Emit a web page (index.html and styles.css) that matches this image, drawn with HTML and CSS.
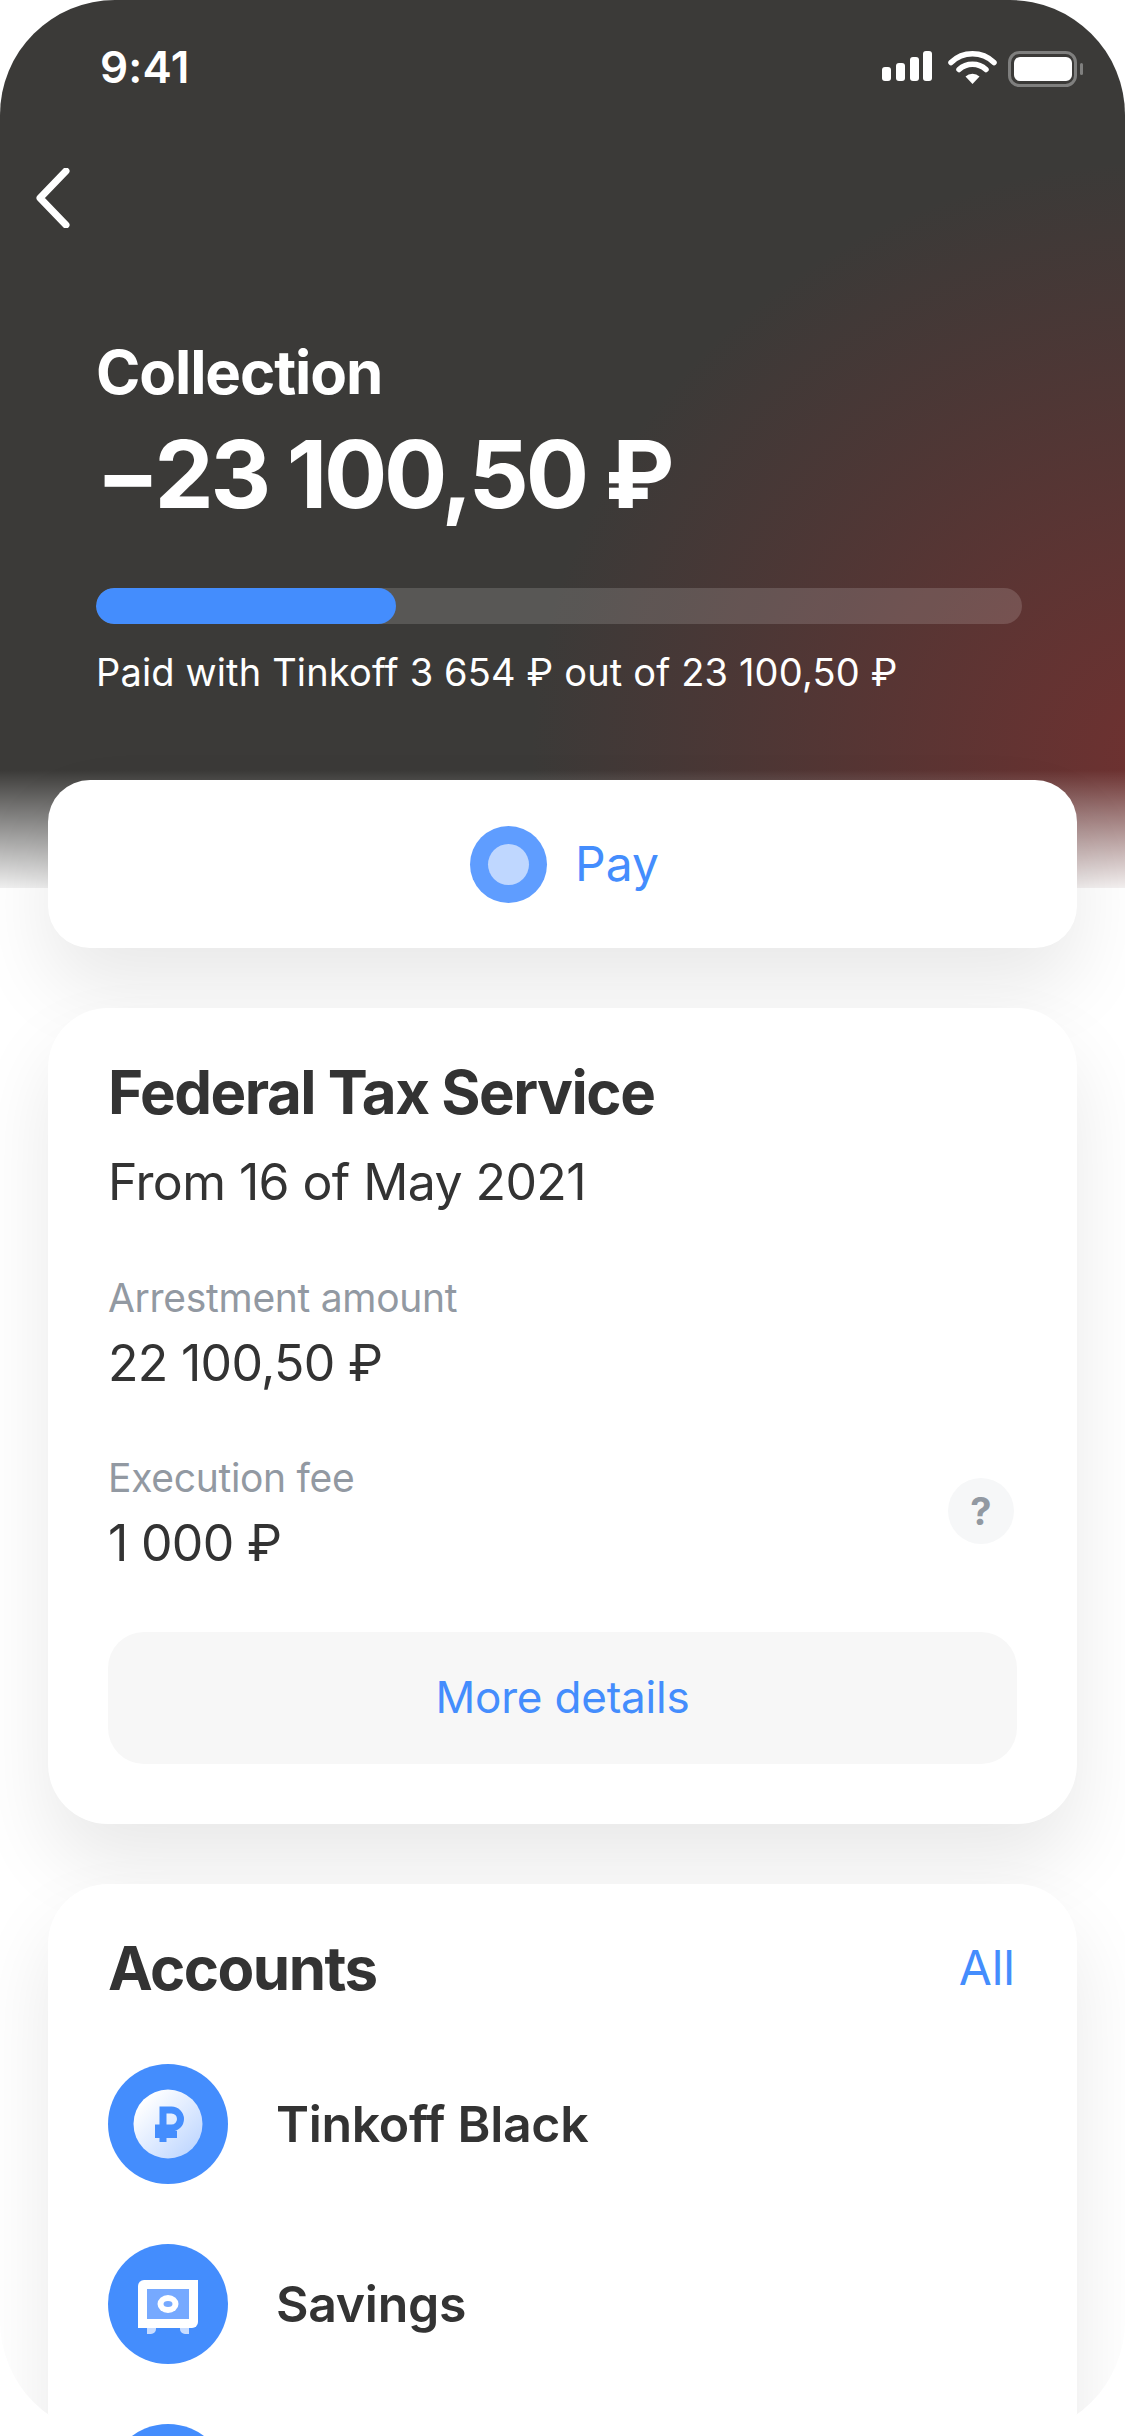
FILE: index.html
```html
<!DOCTYPE html>
<html lang="en">
<head>
    <meta charset="utf-8">
    <title>Collection</title>
    <link rel="stylesheet" href="styles.css">
</head>
<body>
<div class="screen">
    <!-- dark header -->
    <div class="header">
        <div class="status">
            <span class="time">9:41</span>
            <svg class="status-icons" width="204" height="36" viewBox="0 0 204 36">
                <rect x="0" y="16" width="9" height="14" rx="3" fill="#fff"/>
                <rect x="14" y="12" width="9" height="18" rx="3" fill="#fff"/>
                <rect x="28" y="6" width="9" height="24" rx="3" fill="#fff"/>
                <rect x="41" y="0" width="9" height="30" rx="3" fill="#fff"/>
                <path d="M69 10.500A31 31 0 0 1 112 10.500" fill="none" stroke="#fff" stroke-width="5.500" stroke-linecap="round" transform="translate(0 1)"/>
                <path d="M77 17.500A20 20 0 0 1 104 17.500" fill="none" stroke="#fff" stroke-width="5.500" stroke-linecap="round" transform="translate(0 1)"/>
                <path d="M90.500 33L83.500 25.500A10 10 0 0 1 97.500 25.500Z" fill="#fff"/>
                <rect x="127.500" y="1.500" width="66" height="33" rx="10" fill="none" stroke="#7f7f7e" stroke-width="3"/>
                <rect x="132" y="6" width="58" height="24" rx="6" fill="#fff"/>
                <rect x="198" y="12" width="3" height="12" rx="1.500" fill="#7f7f7e"/>
            </svg>
        </div>
        <svg class="back" width="34" height="60" viewBox="0 0 34 60">
            <path d="M30 3L4 30L30 57" fill="none" stroke="#fff" stroke-width="7" stroke-linecap="round" stroke-linejoin="round"/>
        </svg>
        <div class="summary">
            <div class="summary-title">Collection</div>
            <div class="summary-amount">−23 100,50 ₽</div>
            <div class="bar"><div class="bar-fill"></div></div>
            <div class="summary-note">Paid with Tinkoff 3 654 ₽ out of 23 100,50 ₽</div>
        </div>
    </div>

    <div class="content">
        <div class="card pay">
            <span class="pay-icon"><span class="pay-dot"></span></span>
            <span class="pay-text">Pay</span>
        </div>

        <div class="card info">
            <div class="card-title">Federal Tax Service</div>
            <div class="info-date">From 16 of May 2021</div>
            <div class="field">
                <div class="field-label">Arrestment amount</div>
                <div class="field-value">22 100,50 ₽</div>
            </div>
            <div class="field field-row">
                <div>
                    <div class="field-label">Execution fee</div>
                    <div class="field-value">1 000 ₽</div>
                </div>
                <span class="help">?</span>
            </div>
            <div class="more">More details</div>
        </div>

        <div class="card accounts">
            <div class="accounts-head">
                <span class="card-title">Accounts</span>
                <span class="all">All</span>
            </div>
            <div class="account">
                <svg class="account-icon" width="120" height="120" viewBox="0 0 120 120">
                    <defs>
                        <linearGradient id="coin" x1="0" y1="0" x2="1" y2="1">
                            <stop offset="0.150" stop-color="#fff"/>
                            <stop offset="0.850" stop-color="#c3d9ff"/>
                        </linearGradient>
                    </defs>
                    <circle cx="60" cy="60" r="60" fill="#448dfd"/>
                    <circle cx="60" cy="60" r="34.500" fill="url(#coin)"/>
                    <path d="M55 78V46H63.500A9 9 0 0 1 63.500 64H47M47 70.500H69" fill="none" stroke="#448dfd" stroke-width="7"/>
                </svg>
                <span class="account-name">Tinkoff Black</span>
            </div>
            <div class="account">
                <svg class="account-icon" width="120" height="120" viewBox="0 0 120 120">
                    <circle cx="60" cy="60" r="60" fill="#448dfd"/>
                    <path d="M39 84H48V85A5 5 0 0 1 43 90H39ZM72 84H81V90H77A5 5 0 0 1 72 85Z" fill="#c8dcff"/>
                    <path d="M36 36H90V78A6 6 0 0 1 84 84H30V42A6 6 0 0 1 36 36Z" fill="#fff"/>
                    <rect x="39" y="45" width="42" height="30" fill="#76a9ff"/>
                    <ellipse cx="60" cy="60" rx="10.500" ry="9" fill="#fff"/>
                    <ellipse cx="60" cy="60" rx="4.500" ry="3" fill="#76a9ff"/>
                </svg>
                <span class="account-name">Savings</span>
            </div>
            <div class="account">
                <svg class="account-icon" width="120" height="120" viewBox="0 0 120 120">
                    <circle cx="60" cy="60" r="60" fill="#448dfd"/>
                </svg>
            </div>
        </div>
    </div>
</div>
</body>
</html>
```

FILE: styles.css
```css
*{margin: 0;padding: 0;box-sizing: border-box;}
body{width: 1125px;height: 2436px;background: #fff;font-family: Inter, "Noto Sans", sans-serif;color: #333;overflow: hidden;}
.screen{width: 1125px;height: 2436px;border-radius: 115px;overflow: hidden;background: #fff;}

/* header */
.header{height: 888px;padding-top: 51px;color: #fff;background:
    linear-gradient(to bottom, rgba(255,255,255,0) 770px, rgba(255,255,255,.93) 888px),
    radial-gradient(640px 600px at 1170px 760px, #703130 0, rgba(112,49,48,0) 100%),
    #3b3a38;}
.status{display: flex;justify-content: space-between;align-items: center;height: 36px;padding: 0 39px 0 100px;}
.time{margin-bottom: 4px;font-size: 44px;font-weight: 600;line-height: 36px;letter-spacing: .2px;}
.status-icons{display: block;}
.back{display: block;margin: 81px 0 0 36px;}
.summary{padding: 112px 103px 0 96px;}
.summary-title{font-size: 60px;font-weight: 700;line-height: 64px;letter-spacing: -1.1px;}
.summary-amount{margin-top: 10px;font-size: 94px;font-weight: 700;line-height: 120px;letter-spacing: -3.3px;}
.bar{margin-top: 54px;height: 36px;border-radius: 18px;background: rgba(255,255,255,.15);overflow: hidden;}
.bar-fill{width: 300px;height: 36px;border-radius: 18px;background: #448dfd;}
.summary-note{margin-top: 22px;font-size: 38px;line-height: 52px;letter-spacing: .15px;}

/* cards */
.content{padding: 0 48px;margin-top: -108px;}
.card{background: #fff;border-radius: 60px;box-shadow: 0 40px 80px rgba(0,0,0,.09);margin-bottom: 60px;}
.pay{height: 168px;border-radius: 42px;display: flex;justify-content: center;align-items: center;gap: 28px;padding-left: 4px;}
.pay-icon{width: 77px;height: 77px;border-radius: 50%;background: #5f9dff;display: flex;justify-content: center;align-items: center;}
.pay-dot{width: 41px;height: 41px;border-radius: 50%;background: #bfd7ff;}
.pay-text{font-size: 48px;color: #448dfd;line-height: 60px;}

.info{height: 816px;padding: 52px 60px 60px;}
.card-title{font-size: 60px;font-weight: 700;line-height: 64px;letter-spacing: -1.5px;}
.info-date{margin: 28px 0 62px;font-size: 50px;line-height: 60px;letter-spacing: -.6px;}
.field{margin-top: 61px;}
.field-label{font-size: 39px;line-height: 48px;letter-spacing: -.3px;color: #9299a2;}
.field-value{margin-top: 11px;font-size: 50px;line-height: 60px;letter-spacing: -.7px;}
.field-row{display: flex;justify-content: space-between;align-items: center;padding-right: 3px;}
.help{width: 66px;height: 66px;margin-bottom: 5px;border-radius: 50%;background: #f6f7f8;color: #9299a2;font-size: 38px;font-weight: 700;line-height: 66px;text-align: center;}
.more{margin-top: 59px;height: 132px;border-radius: 36px;background: #f7f7f7;color: #448dfd;font-size: 44px;line-height: 130px;letter-spacing: -.2px;text-align: center;}

.accounts{padding: 52px 60px 60px;min-height: 800px;}
.accounts-head{display: flex;justify-content: space-between;align-items: center;}
.all{font-size: 48px;color: #448dfd;line-height: 64px;padding-right: 2px;}
.account{display: flex;align-items: center;gap: 48px;margin-top: 60px;}
.accounts-head + .account{margin-top: 64px;}
.account-icon{display: block;flex: none;}
.account-name{font-size: 50px;font-weight: 600;letter-spacing: -.3px;}
```
